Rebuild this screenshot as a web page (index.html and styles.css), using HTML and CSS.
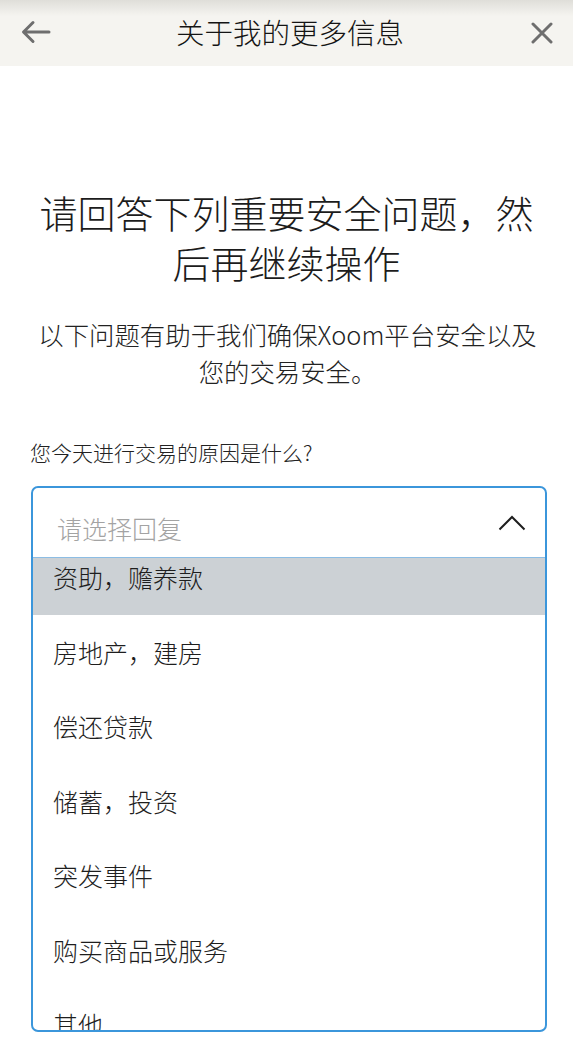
FILE: index.html
```html
<!DOCTYPE html>
<html lang="zh-CN">
<head>
<meta charset="utf-8">
<title>关于我的更多信息</title>
<link rel="stylesheet" href="styles.css">
</head>
<body>
<header class="topbar">
  <button class="icon-btn back" aria-label="返回">
    <svg width="30" height="24" viewBox="0 0 30 24"><path d="M28 12H3M12 2.5L2.5 12L12 21.5" fill="none" stroke="#6e6e6e" stroke-width="3" stroke-linecap="round" stroke-linejoin="round"/></svg>
  </button>
  <h1 class="topbar-title">关于我的更多信息</h1>
  <button class="icon-btn close" aria-label="关闭">
    <svg width="22" height="22" viewBox="0 0 22 22"><path d="M2 2L20 20M20 2L2 20" fill="none" stroke="#6e6e6e" stroke-width="3" stroke-linecap="round"/></svg>
  </button>
</header>
<main class="content">
  <h2 class="heading">请回答下列重要安全问题，然后再继续操作</h2>
  <p class="subtitle">以下问题有助于我们确保Xoom平台安全以及您的交易安全。</p>
  <label class="field-label">您今天进行交易的原因是什么?</label>
  <div class="select">
    <div class="select-head">
      <span class="placeholder">请选择回复</span>
      <svg class="chevron" width="28" height="16" viewBox="0 0 28 16"><path d="M1.5 14.5L14 2L26.5 14.5" fill="none" stroke="#1e1e1e" stroke-width="2"/></svg>
    </div>
    <ul class="options">
      <li class="option active">资助，赡养款</li>
      <li class="option">房地产，建房</li>
      <li class="option">偿还贷款</li>
      <li class="option">储蓄，投资</li>
      <li class="option">突发事件</li>
      <li class="option">购买商品或服务</li>
      <li class="option">其他</li>
    </ul>
  </div>
</main>
</body>
</html>
```
FILE: styles.css
```css
* { box-sizing: border-box; }
html, body { margin: 0; padding: 0; }
body {
  width: 573px;
  height: 1053px;
  overflow: hidden;
  background: #ffffff;
  font-family: "Noto Sans CJK SC", "Noto Sans", sans-serif;
  font-weight: 300;
  color: #1c1c1c;
}
.topbar {
  height: 66px;
  display: flex;
  align-items: center;
  justify-content: space-between;
  padding: 0 15px 0 20px;
  background: linear-gradient(to bottom, #dfded9 0px, #f5f4f0 16px, #f5f4f0 100%);
}
.icon-btn {
  border: 0;
  background: none;
  padding: 0;
  display: flex;
  align-items: center;
  justify-content: center;
  width: 32px;
  height: 32px;
}
.back { margin-top: -3px; }
.close { margin-top: 0; }
.topbar-title {
  margin: -2px 0 0 2px;
  font-size: 28.5px;
  font-weight: 300;
  line-height: 36px;
  color: #141414;
}
.content {
  padding: 121px 26px 0 30px;
}
.heading {
  margin: 0 0 0 -4px;
  text-align: center;
  font-size: 38px;
  line-height: 50px;
  font-weight: 300;
  color: #1c1c1c;
}
.subtitle {
  width: 510px;
  margin: 29px auto 0;
  text-align: center;
  font-size: 25.4px;
  line-height: 37px;
  color: #222;
  position: relative;
  left: -1px;
}
.field-label {
  display: block;
  margin-top: 47px;
  font-size: 21px;
  line-height: 30px;
  color: #222;
}
.select {
  margin: 19px 0 0 1px;
  height: 546px;
  border: 2px solid #3b96db;
  border-radius: 7px;
  overflow: hidden;
  display: flex;
  flex-direction: column;
}
.select-head {
  flex: none;
  height: 70px;
  display: flex;
  justify-content: space-between;
  align-items: flex-start;
  padding: 25px 19px 0 24px;
  border-bottom: 1px solid #8cbde4;
}
.placeholder {
  font-size: 25px;
  line-height: 30px;
  color: #a3a3a3;
}
.chevron { margin-top: 2px; }
.options {
  list-style: none;
  margin: 0;
  padding: 0;
  flex: 1;
  overflow: hidden;
}
.option {
  height: 74.5px;
  display: flex;
  align-items: center;
  padding-left: 20px;
  font-size: 25px;
  color: #1e1e1e;
}
.option:first-child { margin-top: -18px; }
.option.active { background: #ccd1d5; }
```
